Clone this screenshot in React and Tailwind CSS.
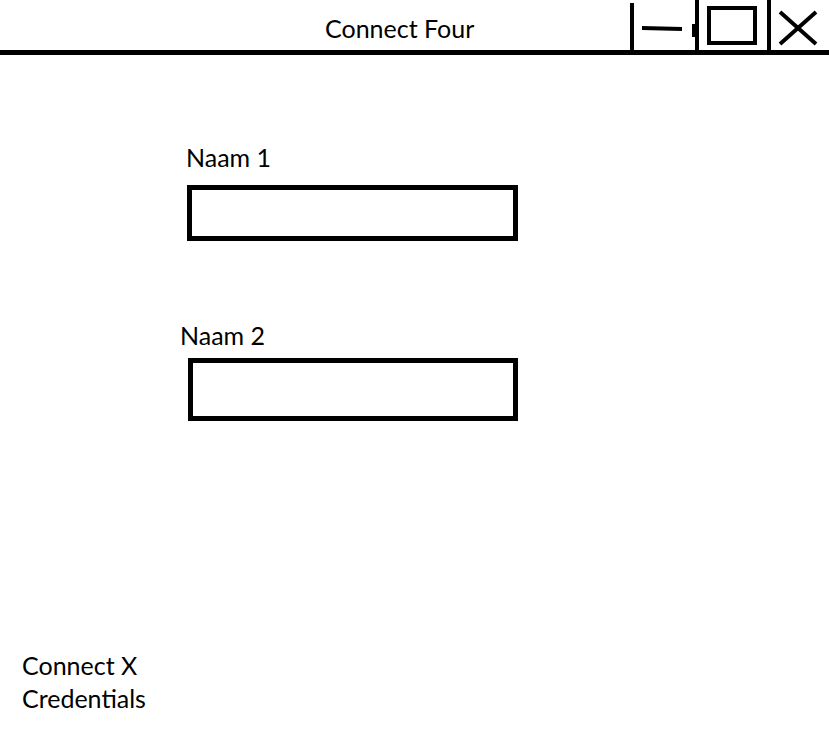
export default function App() {
  return (
    <div className="w-[829px] h-[732px] bg-white text-black flex flex-col font-['Lato',sans-serif]">
      <header className="h-[55px] border-b-[5px] border-black flex items-stretch">
        <div className="pl-[325px] pt-[14px] text-[25px] leading-[28px]">Connect Four</div>
        <svg className="ml-auto" width="199" height="50" viewBox="0 0 199 50">
          <g stroke="black" strokeWidth="4" fill="none" strokeLinecap="butt">
            <line x1="2" y1="3" x2="2" y2="50" />
            <line x1="12" y1="28" x2="52" y2="29" />
            <line x1="67" y1="0" x2="67" y2="50" />
            <line x1="64" y1="24" x2="64" y2="37" />
            <rect x="79" y="8" width="46" height="35" />
            <line x1="139" y1="0" x2="139" y2="50" />
            <line x1="150" y1="12" x2="186" y2="44" />
            <line x1="186" y1="12" x2="150" y2="44" />
          </g>
        </svg>
      </header>
      <main className="flex-1 flex flex-col">
        <div className="pl-[186px] pt-[88px] text-[25px] leading-[28px]">Naam 1</div>
        <div className="ml-[187px] mt-[14px] w-[331px] h-[56px] border-[5px] border-black" />
        <div className="pl-[180px] pt-[80px] text-[25px] leading-[28px]">Naam 2</div>
        <div className="ml-[188px] mt-[9px] w-[330px] h-[63px] border-[5px] border-black" />
      </main>
      <footer className="pl-[22px] pb-[17px] text-[25px] leading-[33px]">
        <div>Connect X</div>
        <div>Credentials</div>
      </footer>
    </div>
  );
}
